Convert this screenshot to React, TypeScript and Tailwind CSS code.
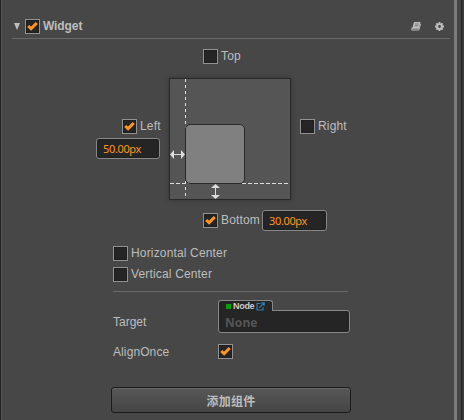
import React from "react";

function Check({ on = false }: { on?: boolean }) {
  return (
    <span className="flex h-[15px] w-[15px] shrink-0 items-center justify-center border border-[#929292] bg-[#252525] shadow-[inset_0_0_2px_#161616]">
      {on && (
        <svg width="13" height="13" viewBox="0 0 13 13" fill="none">
          <path d="M2.2 6 L5.1 8.6 L10.8 3" stroke="#fd942b" strokeWidth="3" />
        </svg>
      )}
    </span>
  );
}

function Field({ label, on }: { label: string; on?: boolean }) {
  return (
    <label className="flex h-[15px] items-center gap-[3px] tracking-[0.16px]">
      <Check on={on} />
      <span className="whitespace-nowrap">{label}</span>
    </label>
  );
}

function NumberBox({ value }: { value: string }) {
  return (
    <div className="flex h-[21px] w-full items-center rounded-[3px] border border-[#888] bg-[#252525] pl-[6px] font-['Noto_Sans','Open_Sans',sans-serif] text-[11px] tracking-[-0.35px] text-[#fd942b] shadow-[inset_0_0_2px_#161616]">
      {value}
    </div>
  );
}

function Preview() {
  return (
    <div className="relative h-[122px] w-[122px] shrink-0 border border-[#292929] bg-[#555] shadow-[0_0_4px_#333]">
      <div className="absolute left-[15px] top-0 h-[120px] w-px bg-[repeating-linear-gradient(to_bottom,#ddd_0_3px,transparent_3px_6px)]" />
      <div className="absolute left-0 top-[104px] h-px w-[120px] bg-[repeating-linear-gradient(to_right,#ddd_0_4px,transparent_4px_6px)]" />
      <div className="absolute left-[15px] top-[45px] h-[60px] w-[60px] rounded-[5px] border border-[#292929] bg-[#808080]" />
      <svg className="absolute left-0 top-[71px]" width="15" height="9" viewBox="0 0 15 9" fill="#ddd">
        <path d="M0 4.5 L4 0 V4 H11 V0 L15 4.5 L11 9 V5 H4 V9Z" />
      </svg>
      <svg className="absolute left-[41px] top-[105px]" width="9" height="15" viewBox="0 0 9 15" fill="#ddd">
        <path d="M4.5 0 L9 4 H5 V11 H9 L4.5 15 L0 11 H4 V4 H0Z" />
      </svg>
    </div>
  );
}

export default function App() {
  return (
    <div className="flex h-[420px] w-[464px] overflow-hidden bg-[#474747] font-['Liberation_Sans',Arial,sans-serif] text-[12px] leading-[15px] text-[#bdbdbd]">
      <div className="w-[2px] shrink-0 border-l border-r border-l-[#222] border-r-[#555]" />
      <main className="flex w-[452px] shrink-0 flex-col pl-[10px]">
        <header className="mt-[19px] flex h-[20px] w-[438px] items-start border-b border-[#686868]">
          <svg className="ml-[2px] mt-[4px]" width="6" height="7" viewBox="0 0 6 7" fill="#bdbdbd">
            <path d="M0 0 H6 L3 7Z" />
          </svg>
          <div className="ml-[5px] flex items-center gap-[3px] font-bold tracking-[-0.1px]">
            <Check on />
            <span>Widget</span>
          </div>
          <svg className="ml-auto mt-[3px]" width="10" height="9" viewBox="0 0 10 9">
            <path d="M3 0 H9.5 L7.8 6.8 H1.2Z" fill="#bdbdbd" />
            <path d="M1.3 5.2 L.7 8 H7.8 L9.6 1.8" fill="none" stroke="#bdbdbd" strokeWidth="1" />
            <path d="M4.1 2 H7.7 M3.7 3.8 H7.2" stroke="#5a5a5a" strokeWidth=".7" />
          </svg>
          <svg className="ml-[14px] mr-[6px] mt-[3px]" width="9" height="9" viewBox="0 0 9 9">
            <path d="M4.5 0V9 M0 4.5H9 M1.4 1.4L7.6 7.6 M7.6 1.4L1.4 7.6" stroke="#bdbdbd" strokeWidth="1.8" />
            <circle cx="4.5" cy="4.5" r="2.4" fill="#474747" stroke="#bdbdbd" strokeWidth="1.9" />
          </svg>
        </header>

        <section className="mt-[10px] flex flex-col">
          <div className="ml-[191px]">
            <Field label="Top" />
          </div>
          <div className="mt-[14px] flex items-start">
            <div className="flex w-[157px] flex-col pt-[41px]">
              <div className="ml-[110px]">
                <Field label="Left" on />
              </div>
              <div className="ml-[84px] mt-[4px] w-[64px]">
                <NumberBox value="50.00px" />
              </div>
            </div>
            <Preview />
            <div className="ml-[9px] pt-[41px]">
              <Field label="Right" />
            </div>
          </div>
          <div className="ml-[191px] mt-[10px] flex h-[21px] items-center gap-[3px]">
            <div className="w-[56px]">
              <Field label="Bottom" on />
            </div>
            <div className="w-[65px]">
              <NumberBox value="30.00px" />
            </div>
          </div>
        </section>

        <section className="ml-[101px] mt-[15px] flex w-[235px] flex-col gap-[6px] border-b border-[#686868] pb-[9px]">
          <Field label="Horizontal Center" />
          <Field label="Vertical Center" />
        </section>

        <section className="ml-[101px] mt-[8px] flex flex-col">
          <div className="flex h-[33px] items-start">
            <span className="w-[105px] pt-[15px]">Target</span>
            <div className="flex w-[132px] flex-col">
              <div className="z-10 flex h-[11px] w-[55px] items-center rounded-t-[3px] border border-b-0 border-[#888] bg-[#252525] pl-[7px]">
                <span className="mt-px h-[5px] w-[5px] bg-[#0a9d0a]" />
                <b className="ml-[2px] text-[9px] leading-[10px] tracking-[-0.3px] text-[#ccc]">Node</b>
                <svg className="ml-[2px]" width="9" height="9" viewBox="0 0 9 9" fill="none" stroke="#327cae" strokeWidth="1.2">
                  <path d="M4.5 1.5 H1 V8 H7 V5 M3.2 5.8 L8 1 M5.2 .8 H8.2 V3.8" />
                </svg>
              </div>
              <div className="-mt-px flex h-[23px] items-center rounded-[3px] rounded-tl-none border border-[#888] bg-[#252525] pl-[6px] pt-[2px] font-['Open_Sans',sans-serif] font-bold tracking-[0.1px] text-[#555]">
                None
              </div>
            </div>
          </div>
          <div className="mt-[11px] flex h-[15px] items-center">
            <span className="w-[105px] pt-[2px] tracking-[0.1px]">AlignOnce</span>
            <Check on />
          </div>
        </section>

        <button className="ml-[99px] mt-[28px] flex h-[26px] w-[240px] items-center justify-center rounded-[3px] border border-[#1b1b1b] bg-linear-to-b from-[#575757] to-[#454545] pt-[4px] font-['Liberation_Sans','Noto_Sans_CJK_SC',sans-serif] font-bold tracking-[0.2px] shadow-[inset_0_1px_0_#656565]">
          添加组件
        </button>
      </main>
      <div className="w-[3px] shrink-0 bg-[#7b7b7b]" />
      <div className="w-[4px] shrink-0 bg-[#454545]" />
      <div className="w-px shrink-0 bg-[#222]" />
      <div className="w-[2px] shrink-0 bg-[#3b3b3b]" />
    </div>
  );
}
